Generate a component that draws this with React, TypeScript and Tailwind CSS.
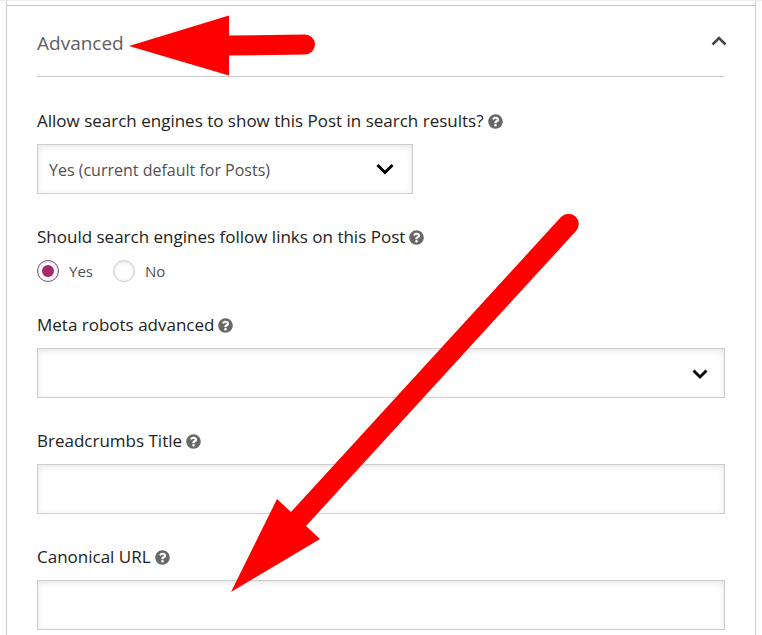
import type { ReactNode } from "react"
import { FaQuestionCircle } from "react-icons/fa"

const BOX =
  "h-[50px] w-full appearance-none border border-[#cdcdcd] bg-white px-[11px] pt-0.5 text-base text-[#505050] shadow-[inset_0_2px_6px_rgba(0,0,0,0.1)] outline-none"

function Chevron({ className, d }: { className: string; d: string }) {
  return (
    <svg
      aria-hidden="true"
      viewBox="0 0 18 12"
      fill="none"
      stroke="currentColor"
      className={`h-3 w-[18px] ${className}`}
    >
      <path d={d} />
    </svg>
  )
}

function HelpButton({ topic }: { topic: string }) {
  return (
    <button
      type="button"
      aria-label={`Help: ${topic}`}
      className="shrink-0 text-[15px] text-[#686868]"
    >
      <FaQuestionCircle />
    </button>
  )
}

function Field({
  id,
  label,
  children,
}: {
  id: string
  label: string
  children: ReactNode
}) {
  return (
    <div className="space-y-[11px]">
      <div className="flex items-center gap-1 text-[17px] leading-6 text-[#222]">
        <label htmlFor={id}>{label}</label>
        <HelpButton topic={label} />
      </div>
      {children}
    </div>
  )
}

function Radio({ label, checked }: { label: string; checked?: boolean }) {
  return (
    <label className="flex items-center gap-2.5 text-[15px] leading-[22px] text-[#505050]">
      <input
        type="radio"
        name="follow"
        defaultChecked={checked}
        className="grid size-[22px] appearance-none place-items-center rounded-full border border-[#cdcdcd] bg-white shadow-[inset_0_1px_3px_rgba(0,0,0,0.15)] before:size-3 before:rounded-full checked:border-[#8c4a7c] checked:before:bg-[#a4286a]"
      />
      {label}
    </label>
  )
}

function Arrows() {
  return (
    <svg
      aria-hidden="true"
      viewBox="0 1 762 635"
      className="pointer-events-none absolute top-0 left-0 h-[635px] w-[762px]"
      fill="#fe0000"
    >
      <path d="M129 46 229 15.5V35.5L305 34.5A10 10 0 0 1 305 54.5L229 55.5V75.5Z" />
      <path d="M231 592 277 499 291 512 561 217A10 10 0 0 1 576 231L306 526 320 539Z" />
    </svg>
  )
}

export default function App() {
  return (
    <main className="relative min-h-screen overflow-hidden border-t border-[#ebebeb] bg-white px-1.5 font-['Open_Sans','Noto_Sans',sans-serif]">
      <div className="min-h-screen border-x border-[#cdcdcd] pt-1">
        <section className="border-t border-[#c4c4c4] px-[30px] pb-1">
          <h2 className="border-b border-[#cdcdcd]">
            <button
              type="button"
              aria-expanded="true"
              className="flex h-[70px] w-full items-center justify-between text-left text-[19px] text-[#606060]"
            >
              <span className="pt-1">Advanced</span>
              <Chevron
                className="-mr-[3px] stroke-[2.5] text-[#444]"
                d="M2.5 9.5 9 3 15.5 9.5"
              />
            </button>
          </h2>
          <form className="space-y-[31px] pt-8">
            <Field
              id="noindex"
              label="Allow search engines to show this Post in search results?"
            >
              <div className="relative w-[376px] max-w-full">
                <select id="noindex" className={BOX}>
                  <option>Yes (current default for Posts)</option>
                </select>
                <Chevron
                  className="pointer-events-none absolute top-[19px] right-[19px] stroke-3 text-black"
                  d="M1.5 2 9 9.5 16.5 2"
                />
              </div>
            </Field>
            <Field
              id="follow"
              label="Should search engines follow links on this Post"
            >
              <div id="follow" role="radiogroup" className="flex gap-5">
                <Radio label="Yes" checked />
                <Radio label="No" />
              </div>
            </Field>
            <Field id="robots" label="Meta robots advanced">
              <div className="relative">
                <select id="robots" className={BOX}>
                  <option></option>
                </select>
                <Chevron
                  className="pointer-events-none absolute top-5 right-4 stroke-3 text-[#111]"
                  d="M2.5 2.5 9 9 15.5 2.5"
                />
              </div>
            </Field>
            <Field id="breadcrumbs" label="Breadcrumbs Title">
              <input id="breadcrumbs" type="text" className={BOX} />
            </Field>
            <Field id="canonical" label="Canonical URL">
              <input id="canonical" type="text" className={BOX} />
            </Field>
          </form>
        </section>
      </div>
      <Arrows />
    </main>
  )
}
